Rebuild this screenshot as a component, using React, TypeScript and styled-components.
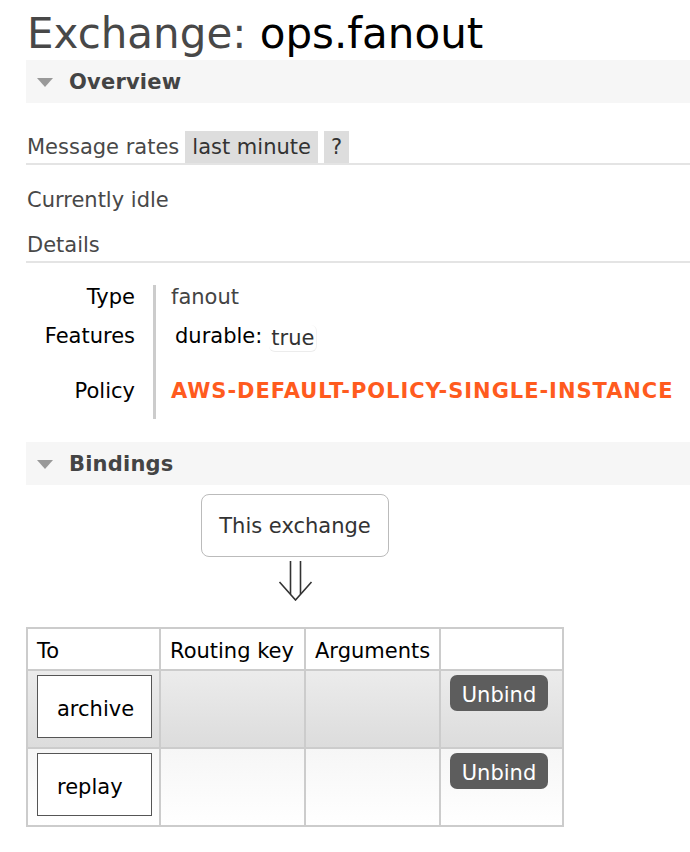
import styled, { createGlobalStyle } from "styled-components";

const GlobalStyle = createGlobalStyle`
  html, body {
    margin: 0;
    padding: 0;
    background: #fff;
  }
  body {
    font-family: "DejaVu Sans", Verdana, sans-serif;
    font-size: 21px;
    color: #484848;
  }
`;

const Page = styled.div`
  padding: 8px 0 0 26px;
  width: 664px;
`;

const Title = styled.h1`
  margin: 0;
  font-size: 42px;
  font-weight: normal;
  line-height: 52px;
  color: #484848;
  padding-left: 1px;
  b {
    font-weight: normal;
    color: #000;
  }
`;

const SectionBar = styled.div<{ $top: number }>`
  display: flex;
  align-items: center;
  gap: 16px;
  height: 43px;
  margin-top: ${(p) => p.$top}px;
  padding-left: 11px;
  background: #f6f6f6;
  font-weight: bold;
  color: #444;
  letter-spacing: 0.2px;
`;

const Triangle = styled.span`
  width: 0;
  height: 0;
  border-left: 8.5px solid transparent;
  border-right: 8.5px solid transparent;
  border-top: 9px solid #999;
  margin-top: 2px;
`;

const RatesRow = styled.div`
  display: flex;
  align-items: center;
  gap: 6px;
  margin-top: 28px;
  height: 32px;
  border-bottom: 2px solid #e4e4e4;
  padding-left: 1px;
`;

const Chip = styled.span`
  display: flex;
  align-items: center;
  height: 32px;
  padding: 0 7px;
  background: #ddd;
  color: #333;
`;

const Plain = styled.div<{ $top: number }>`
  padding-left: 1px;
  height: 30px;
  line-height: 30px;
  margin-top: ${(p) => p.$top}px;
`;

const DetailsHead = styled(Plain)`
  border-bottom: 2px solid #e4e4e4;
  height: 30px;
  line-height: 28px;
`;

const FactGrid = styled.div`
  display: grid;
  grid-template-columns: 127px auto;
  margin-top: 22px;
  width: max-content;
`;

const FactLabel = styled.div<{ $h: number }>`
  color: #000;
  padding-right: 18px;
  height: ${(p) => p.$h}px;
  display: flex;
  align-items: center;
  justify-content: flex-end;
`;

const FactValue = styled.div<{ $h: number }>`
  border-left: 3px solid #ccc;
  padding-left: 15px;
  height: ${(p) => p.$h}px;
  display: flex;
  align-items: center;
  color: #444;
`;

const Feature = styled.span`
  color: #000;
  margin-left: 4px;
`;

const TrueTag = styled.span`
  margin-left: 7px;
  color: #333;
  padding: 0 2px;
  border-bottom: 1px solid #ececec;
  border-right: 1px solid #f2f2f2;
  border-radius: 6px;
  line-height: 26px;
  margin-top: 4px;
`;

const Policy = styled.span`
  color: #ff5b1e;
  font-weight: bold;
  letter-spacing: 0.95px;
`;

const Diagram = styled.div`
  width: 538px;
  display: flex;
  flex-direction: column;
  align-items: center;
  margin-top: 9px;
`;

const ExchangeBox = styled.div`
  width: 186px;
  height: 60px;
  border: 1px solid #bbb;
  border-radius: 8px;
  display: flex;
  align-items: center;
  justify-content: center;
  color: #333;
  padding-top: 1px;
  box-sizing: content-box;
`;

const Arrow = styled.svg`
  margin-top: 4px;
  margin-left: 2px;
  display: block;
`;

const Table = styled.table`
  margin-top: 26px;
  border-collapse: collapse;
  border: 2px solid #ccc;
  width: 538px;
  td, th {
    border: 2px solid #ccc;
    vertical-align: top;
  }
  th {
    text-align: left;
    font-weight: normal;
    color: #000;
    height: 37px;
    padding: 3px 8px 0 9px;
    background: #fff;
    vertical-align: middle;
  }
`;

const Row = styled.tr<{ $alt: boolean }>`
  background: ${(p) =>
    p.$alt
      ? "linear-gradient(#ececec, #dcdcdc)"
      : "linear-gradient(#f6f6f6, #fff)"};
  td {
    height: 72px;
    padding: 4px 0 0 9px;
  }
`;

const QueueBox = styled.div`
  box-sizing: border-box;
  width: 115px;
  height: 63px;
  border: 1px solid #555;
  background: #fff;
  display: flex;
  align-items: center;
  padding: 4px 0 0 19px;
  color: #000;
`;

const Unbind = styled.button`
  font-family: inherit;
  font-size: 21px;
  background: #5d5d5d;
  color: #fff;
  border: none;
  border-radius: 7px;
  width: 98px;
  height: 36px;
  padding: 3px 0 0;
  display: block;
`;

const bindings = ["archive", "replay"];

export default function App() {
  return (
    <>
      <GlobalStyle />
      <Page>
        <Title>
          Exchange: <b>ops.fanout</b>
        </Title>
        <SectionBar $top={0}>
          <Triangle />
          Overview
        </SectionBar>

        <RatesRow>
          <span>Message rates</span>
          <Chip>last minute</Chip>
          <Chip>?</Chip>
        </RatesRow>
        <Plain $top={20}>Currently idle</Plain>
        <DetailsHead $top={16}>Details</DetailsHead>

        <FactGrid>
          <FactLabel $h={24}>Type</FactLabel>
          <FactValue $h={24}>fanout</FactValue>
          <FactLabel $h={54}>Features</FactLabel>
          <FactValue $h={54}>
            <Feature>durable:</Feature>
            <TrueTag>true</TrueTag>
          </FactValue>
          <FactLabel $h={56}>Policy</FactLabel>
          <FactValue $h={56}>
            <Policy>AWS-DEFAULT-POLICY-SINGLE-INSTANCE</Policy>
          </FactValue>
        </FactGrid>

        <SectionBar $top={23}>
          <Triangle />
          Bindings
        </SectionBar>

        <Diagram>
          <ExchangeBox>This exchange</ExchangeBox>
          <Arrow width="36" height="40" viewBox="0 0 36 40">
            <g fill="none" stroke="#333" strokeWidth="1.6">
              <path d="M12.5 0 V33" />
              <path d="M22.5 0 V33" />
              <path d="M1.5 21 L17.5 39 L33.5 21" />
            </g>
          </Arrow>
        </Diagram>

        <Table>
          <thead>
            <tr>
              <th style={{ width: 114 }}>To</th>
              <th style={{ width: 126 }}>Routing key</th>
              <th style={{ width: 116 }}>Arguments</th>
              <th></th>
            </tr>
          </thead>
          <tbody>
            {bindings.map((q, i) => (
              <Row key={q} $alt={i % 2 === 0}>
                <td>
                  <QueueBox>{q}</QueueBox>
                </td>
                <td></td>
                <td></td>
                <td>
                  <Unbind>Unbind</Unbind>
                </td>
              </Row>
            ))}
          </tbody>
        </Table>
      </Page>
    </>
  );
}
